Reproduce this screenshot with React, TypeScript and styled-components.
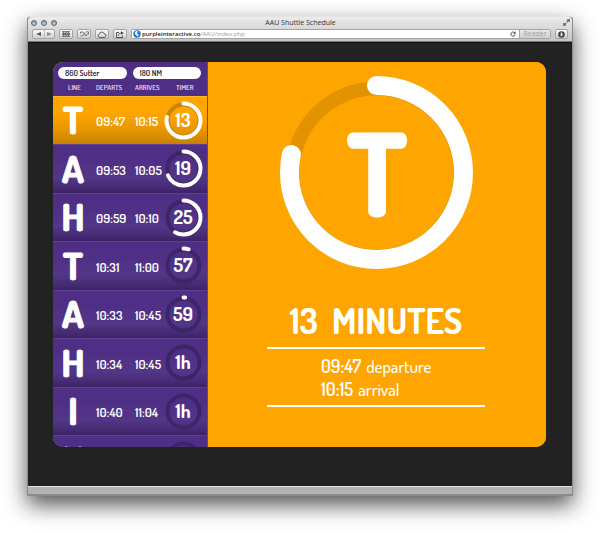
import React from "react";
import styled, { createGlobalStyle } from "styled-components";

const ORANGE = "#ffa500";
const DISPLAY = 'Dosis, "Open Sans Condensed", Lato, sans-serif';
const CHROME = '"Open Sans", "Noto Sans", sans-serif';

const GlobalStyle = createGlobalStyle`
  *, *::before, *::after { box-sizing: border-box; }
  html, body { margin: 0; background: #fff; }
  button, input, select { font: inherit; color: inherit; margin: 0; }
`;

const Page = styled.div`
  display: flex;
  min-height: 100vh;
  padding: 16px 27px 37px;
`;

const Window = styled.section`
  flex: 1;
  min-width: 0;
  height: calc(100vh - 53px);
  min-height: 420px;
  display: flex;
  flex-direction: column;
  border: 1px solid #8b8b8b;
  border-top-color: #e4e4e4;
  border-radius: 4px 4px 2px 2px;
  background: #222;
  overflow: hidden;
  box-shadow: 0 9px 22px rgba(0, 0, 0, 0.68);
`;

const Chrome = styled.header`
  flex: none;
  background: linear-gradient(#ececec, #c4c4c4);
  border-bottom: 1px solid #777;
  font-family: ${CHROME};
`;

const TitleBar = styled.div`
  display: grid;
  grid-template-columns: 1fr auto 1fr;
  align-items: center;
  height: 11px;
  padding: 0 2px 0 3px;
`;

const Lights = styled.div`
  display: flex;
  gap: 4px;
`;

const Light = styled.button`
  width: 6px;
  height: 6px;
  padding: 0;
  border: 1px solid #59656e;
  border-radius: 50%;
  background: radial-gradient(circle at 50% 75%, #c6d5de, #7e8e99);
`;

const WindowTitle = styled.h1`
  margin: 0;
  font-size: 7px;
  line-height: 10px;
  font-weight: 500;
  color: #333;
`;

const PlainButton = styled.button`
  display: flex;
  align-items: center;
  justify-content: center;
  padding: 0;
  border: 0;
  background: none;
  color: #555;
`;

const Expand = styled(PlainButton)`
  justify-self: end;
  color: #777;
`;

const Toolbar = styled.div`
  display: flex;
  align-items: center;
  gap: 4px;
  height: 13px;
  padding: 0 4px 1px;
`;

const ToolButton = styled(PlainButton)<{ $round?: boolean }>`
  flex: none;
  width: ${(p) => (p.$round ? 13 : 14)}px;
  height: 10px;
  border: 1px solid #a3a3a3;
  border-radius: 2px;
  background: linear-gradient(#fafafa, #d2d2d2);
`;

const NavPair = styled.div`
  display: flex;
  flex: none;
  border: 1px solid #a3a3a3;
  border-radius: 2px;
  background: linear-gradient(#fafafa, #d2d2d2);
`;

const NavButton = styled(PlainButton)`
  width: 11px;
  height: 8px;
  & + & { border-left: 1px solid #bbb; color: #8c8c8c; width: 10px; }
`;

const AddressBar = styled.form`
  flex: 1;
  min-width: 0;
  display: flex;
  align-items: center;
  height: 10px;
  border: 1px solid #a3a3a3;
  border-radius: 2px;
  background: #fff;
  font-size: 6px;
  line-height: 8px;
`;

const Address = styled.a`
  flex: 1;
  min-width: 0;
  margin-left: 1px;
  overflow: hidden;
  white-space: nowrap;
  text-decoration: none;
  color: #9a9a9a;
  strong { font-weight: 600; color: #222; }
`;

const Reader = styled(PlainButton)`
  width: 31px;
  height: 8px;
  margin-left: 3px;
  border-left: 1px solid #a3a3a3;
  background: linear-gradient(#e8e8e8, #cfcfcf);
  color: #a2a2a2;
  font-size: 7px;
`;

const Viewport = styled.main`
  flex: 1;
  min-height: 0;
  display: flex;
  padding: 19px 26px 39px 25px;
  background: #222;
  border-top: 1px solid #111;
`;

const StatusBar = styled.footer`
  flex: none;
  height: 9px;
  border-top: 1px solid #e2e2e2;
  background: #b3b3b3;
  border-bottom: 1px solid #8a8a8a;
`;

const Board = styled.div`
  flex: 1;
  min-width: 0;
  display: flex;
  border-radius: 10px;
  overflow: hidden;
  font-family: ${DISPLAY};
  color: #fff;
  background: ${ORANGE};
`;

const Sidebar = styled.aside`
  flex: none;
  width: 155px;
  overflow: hidden;
  background: #4f2f85;
  border-right: 1px solid #7a4a48;
`;

const Filters = styled.div`
  display: grid;
  grid-template-columns: 1fr 1fr;
  gap: 6px;
  padding: 5px 6px 4px 5px;
`;

const StopSelect = styled.select`
  appearance: none;
  min-width: 0;
  height: 12px;
  padding: 0 7px;
  border: 0;
  border-radius: 6px;
  background: #fff;
  color: #2c2438;
  font-size: 8px;
  line-height: 12px;
  font-weight: 600;
`;

const Table = styled.table`
  display: block;
  border-collapse: collapse;
  thead, tbody { display: block; }
`;

const columns = "39px 39px 34px 1fr";

const HeadRow = styled.tr`
  display: grid;
  grid-template-columns: ${columns};
  height: 13px;
`;

const Head = styled.th<{ $align?: "line" | "timer" }>`
  padding: ${(p) => (p.$align === "timer" ? "0 0 0 11px" : "0 0 0 4px")};
  text-align: ${(p) => (p.$align === "line" ? "center" : "left")};
  font-size: 7px;
  line-height: 10px;
  font-weight: 600;
  color: #e6dff0;
`;

const Row = styled.tr<{ $active?: boolean }>`
  display: grid;
  grid-template-columns: ${columns};
  align-items: center;
  height: 48px;
  background: ${(p) =>
    p.$active
      ? `linear-gradient(${ORANGE} 35%, #e89701 70%, #c78003)`
      : "linear-gradient(#4f2f86 30%, #523687 70%, #452a73 90%, #3a2363)"};
  box-shadow: inset 0 1px 0 ${(p) => (p.$active ? "#ffb52e" : "#5d3f94")};
  &:nth-child(even) { height: 49px; }
`;

const Cell = styled.td`
  display: flex;
  padding: 2px 0 0 4px;
  font-size: 13px;
  line-height: 16px;
  font-weight: 600;
`;

const IconCell = styled.td<{ $end?: boolean }>`
  display: flex;
  justify-content: center;
  padding: ${(p) => (p.$end ? "0 5px 0 0" : "0")};
`;

const Drawing = styled.svg`
  display: block;
  flex: none;
  overflow: visible;
  text {
    font-family: ${DISPLAY};
    text-anchor: middle;
    fill: #fff;
    stroke: #fff;
    stroke-linejoin: round;
  }
`;

const Detail = styled.section`
  flex: 1;
  min-width: 0;
  display: flex;
  flex-direction: column;
  align-items: center;
  padding: 14px 12px 0 10px;
  background: ${ORANGE};
`;

const Countdown = styled.h2`
  display: flex;
  gap: 14px;
  margin: 31px 0 0;
  font-size: 35px;
  line-height: 40px;
  font-weight: 700;
  white-space: nowrap;
`;

const Times = styled.dl`
  width: 69%;
  min-width: 200px;
  margin: 7px 0 0;
  padding: 6px 0 4px 54px;
  border-top: 2px solid #fff;
  border-bottom: 2px solid #fff;
  font-size: 18px;
  line-height: 23px;
`;

const TimeLine = styled.div`
  display: flex;
  flex-direction: row-reverse;
  justify-content: flex-end;
  align-items: baseline;
  gap: 5px;
  dt, dd { margin: 0; }
  dt { font-size: 17px; font-weight: 500; }
  dd { font-weight: 600; }
`;

type RingProps = {
  size: number;
  radius: number;
  width: number;
  trackRadius: number;
  trackWidth: number;
  trackColor: string;
  share: number;
  children: React.ReactNode;
};

function Ring({ size, radius, width, trackRadius, trackWidth, trackColor, share, children }: RingProps) {
  const c = size / 2;
  return (
    <Drawing width={size} height={size} viewBox={`0 0 ${size} ${size}`}>
      <circle cx={c} cy={c} r={trackRadius} fill="none" stroke={trackColor} strokeWidth={trackWidth} />
      {share > 0 && (
        <circle
          cx={c}
          cy={c}
          r={radius}
          fill="none"
          stroke="#fff"
          strokeWidth={width}
          strokeLinecap="round"
          pathLength={360}
          strokeDasharray={`${share * 360} 360`}
          transform={`rotate(-90 ${c} ${c})`}
        />
      )}
      {children}
    </Drawing>
  );
}

const shuttles = [
  { line: "T", departs: "09:47", arrives: "10:15", timer: "13", left: 47 },
  { line: "A", departs: "09:53", arrives: "10:05", timer: "19", left: 41 },
  { line: "H", departs: "09:59", arrives: "10:10", timer: "25", left: 35 },
  { line: "T", departs: "10:31", arrives: "11:00", timer: "57", left: 3 },
  { line: "A", departs: "10:33", arrives: "10:45", timer: "59", left: 1 },
  { line: "H", departs: "10:34", arrives: "10:45", timer: "1h", left: 0 },
  { line: "I", departs: "10:40", arrives: "11:04", timer: "1h", left: 0 },
  { line: "H", departs: "10:46", arrives: "11:10", timer: "1h", left: 0 },
];

function BrowserChrome() {
  return (
    <Chrome>
      <TitleBar>
        <Lights>
          <Light aria-label="Close" />
          <Light aria-label="Minimize" />
          <Light aria-label="Zoom" />
        </Lights>
        <WindowTitle>AAU Shuttle Schedule</WindowTitle>
        <Expand aria-label="Full screen">
          <svg width="7" height="7" viewBox="0 0 7 7" fill="currentColor">
            <path d="M3.5 0H7v3.5L5.9 2.4 4.5 3.8 3.2 2.5 4.6 1.1zM0 3.5l1.1 1.1 1.2-1.2 1.3 1.3-1.2 1.2L3.5 7H0z" />
          </svg>
        </Expand>
      </TitleBar>
      <Toolbar>
        <NavPair>
          <NavButton aria-label="Back">
            <svg width="5" height="4" viewBox="0 0 5 4"><path d="M5 0v4L0 2z" fill="currentColor" /></svg>
          </NavButton>
          <NavButton aria-label="Forward">
            <svg width="5" height="4" viewBox="0 0 5 4"><path d="M0 0v4l5-2z" fill="currentColor" /></svg>
          </NavButton>
        </NavPair>
        <ToolButton aria-label="Top sites">
          <svg width="8" height="6" viewBox="0 0 8 6" fill="none" stroke="currentColor" strokeWidth="0.7">
            <path d="M0 .5h8M0 5.5h8M.5 2h2v2h-2zM3 2h2v2H3zM5.5 2h2v2h-2zM1.5 .5v5M4 .5v5M6.5 .5v5" />
          </svg>
        </ToolButton>
        <ToolButton aria-label="Tabs">
          <svg width="9" height="6" viewBox="0 0 9 6" fill="none" stroke="currentColor" strokeWidth="0.8">
            <path d="M.5 1h2.500l2.500 3.500M.5 5h2l3-3.500M.5 1v1.500M6 .8h2.500v2.400L6.500 3.200M5.500 4.500H7" />
          </svg>
        </ToolButton>
        <ToolButton aria-label="iCloud tabs">
          <svg width="10" height="7" viewBox="0 0 10 7" fill="none" stroke="#444" strokeWidth="0.9">
            <path d="M2.300 6.400a1.700 1.700 0 0 1 .1-3.300 2.500 2.500 0 0 1 4.800-.4 1.900 1.900 0 0 1 .4 3.700z" />
          </svg>
        </ToolButton>
        <ToolButton aria-label="Share">
          <svg width="8" height="7" viewBox="0 0 8 7" fill="none" stroke="#444" strokeWidth="0.9">
            <path d="M3 1.500H.5v5h6V4.500M2.500 4.500c.2-1.800 1.300-2.500 3-2.500" />
            <path d="M5 .2 7.800 2 5 3.800z" fill="#444" stroke="none" />
          </svg>
        </ToolButton>
        <AddressBar onSubmit={(e) => e.preventDefault()}>
          <svg width="9" height="8" viewBox="0 0 9 8">
            <circle cx="5" cy="4" r="3.700" fill="#2474c8" />
            <path d="M4.500 1c1.500 0 2 .8 1 1.600-.8.6-.4 1.400.6 1.600 1 .4.4 2-.8 2.400C5 5.400 3.500 5 3 4c-.4-1.200.3-2.500 1.500-3z" fill="#e6f3ff" />
          </svg>
          <Address href="#"><strong>purpleinteractive.co</strong>/AAU/index.php</Address>
          <PlainButton type="button" aria-label="Reload">
            <svg width="6" height="6" viewBox="0 0 6 6" fill="none" stroke="#444" strokeWidth="0.9">
              <path d="M4.600 1.700A2.100 2.100 0 1 0 5.100 3.500" />
              <path d="M5.600.2v2.500H3.100z" fill="#444" stroke="none" />
            </svg>
          </PlainButton>
          <Reader type="button">Reader</Reader>
        </AddressBar>
        <ToolButton $round aria-label="Downloads">
          <svg width="7" height="7" viewBox="0 0 7 7">
            <circle cx="3.500" cy="3.500" r="3.300" fill="#444" />
            <path d="M2.800 1.400h1.400v2h1L3.500 5.400 1.800 3.400h1z" fill="#eee" />
          </svg>
        </ToolButton>
      </Toolbar>
    </Chrome>
  );
}

export default function App() {
  return (
    <>
      <GlobalStyle />
      <Page>
        <Window>
          <BrowserChrome />
          <Viewport>
            <Board>
              <Sidebar>
                <Filters>
                  <StopSelect aria-label="From" defaultValue="860 Sutter">
                    <option>860 Sutter</option>
                  </StopSelect>
                  <StopSelect aria-label="To" defaultValue="180 NM">
                    <option>180 NM</option>
                  </StopSelect>
                </Filters>
                <Table>
                  <thead>
                    <HeadRow>
                      <Head $align="line">LINE</Head>
                      <Head>DEPARTS</Head>
                      <Head>ARRIVES</Head>
                      <Head $align="timer">TIMER</Head>
                    </HeadRow>
                  </thead>
                  <tbody>
                    {shuttles.map((s, i) => (
                      <Row key={i} $active={i === 0}>
                        <IconCell>
                          <Drawing width="24" height="32" viewBox="0 0 24 32">
                            <text x="12" y="30" fontSize="38" fontWeight="700" strokeWidth="1">{s.line}</text>
                          </Drawing>
                        </IconCell>
                        <Cell>{s.departs}</Cell>
                        <Cell>{s.arrives}</Cell>
                        <IconCell $end>
                          <Ring
                            size={37}
                            radius={17}
                            width={4}
                            trackRadius={16}
                            trackWidth={4}
                            trackColor={i === 0 ? "#c98305" : "#3c2668"}
                            share={s.left / 60}
                          >
                            <text x="18" y="25" fontSize="19" fontWeight="700" strokeWidth="0">{s.timer}</text>
                          </Ring>
                        </IconCell>
                      </Row>
                    ))}
                  </tbody>
                </Table>
              </Sidebar>
              <Detail>
                <Ring
                  size={193}
                  radius={87}
                  width={19}
                  trackRadius={84}
                  trackWidth={14}
                  trackColor="#e39300"
                  share={47 / 60}
                >
                  <text x="97" y="140" fontSize="113" fontWeight="700" strokeWidth="3">T</text>
                </Ring>
                <Countdown><span>13</span> <span>MINUTES</span></Countdown>
                <Times>
                  <TimeLine><dt>departure</dt><dd>09:47</dd></TimeLine>
                  <TimeLine><dt>arrival</dt><dd>10:15</dd></TimeLine>
                </Times>
              </Detail>
            </Board>
          </Viewport>
          <StatusBar />
        </Window>
      </Page>
    </>
  );
}
